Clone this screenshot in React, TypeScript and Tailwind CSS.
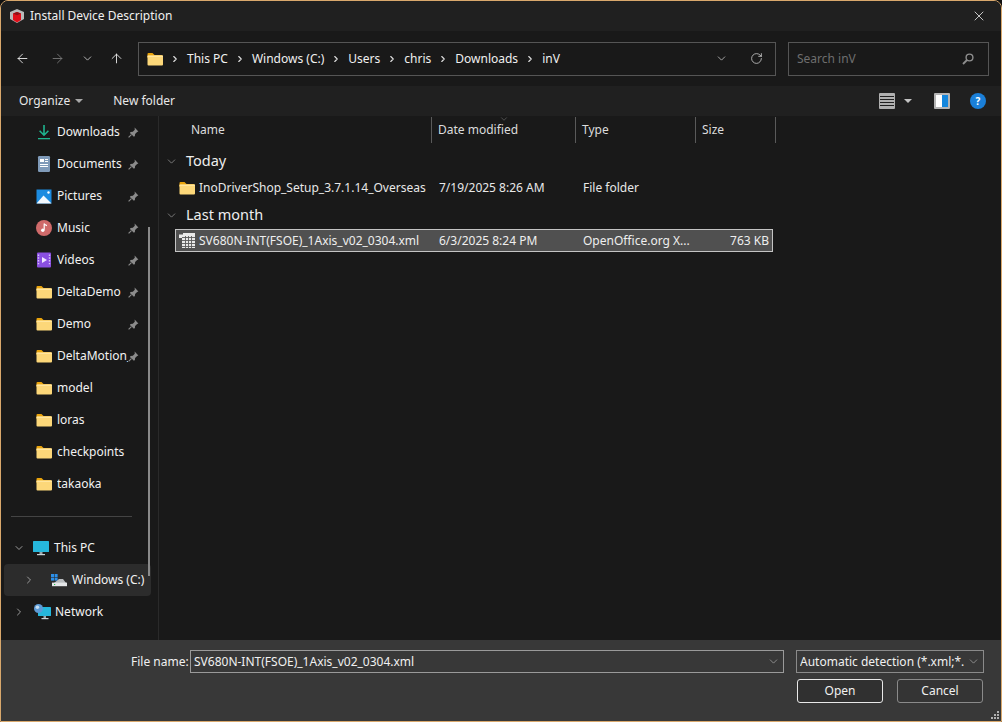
import { ArrowLeft, ArrowRight, ArrowUp, ChevronDown, ChevronRight, RotateCw, X } from 'lucide-react'

const font = "font-['Liberation_Sans',Arial,sans-serif]"

function FolderIcon() {
    return (
        <svg width="16" height="14" viewBox="0 0 16 14" className="shrink-0">
            <path d="M0.5 2a1 1 0 0 1 1-1h4l2 2h7a1 1 0 0 1 1 1v2H0.5z" fill="#e9a30c" />
            <rect x="0.5" y="3.6" width="15.5" height="10" rx="1" fill="#fcd779" />
            <rect x="0.5" y="3.6" width="15.5" height="1.2" fill="#ffe9a8" />
        </svg>
    )
}

function PinIcon() {
    return (
        <svg width="11" height="11" viewBox="0 0 11 11" className="shrink-0">
            <path d="M6.6 0.6l3.8 3.8-1.3.5-2 2-.2 2.2-1 .7L1.9 6l.7-1 2.2-.2 2-2z" fill="#8b8b8b" />
            <path d="M3.4 7.6L.6 10.4" stroke="#8b8b8b" strokeWidth="1.1" />
        </svg>
    )
}

function DownloadIcon() {
    return (
        <svg width="16" height="16" viewBox="0 0 16 16" className="shrink-0">
            <path d="M8 1v10M3.6 6.8L8 11.2l4.4-4.4" stroke="#1fb58f" strokeWidth="1.6" fill="none" />
            <rect x="2" y="14" width="12" height="1.3" fill="#1fb58f" />
        </svg>
    )
}

function DocumentIcon() {
    return (
        <svg width="16" height="16" viewBox="0 0 16 16" className="shrink-0">
            <rect x="2" y="0" width="12" height="16" rx="1.2" fill="#7f9ab8" />
            <rect x="4" y="3" width="4" height="3" fill="#fff" />
            <rect x="9" y="3" width="3" height="1" fill="#fff" />
            <rect x="9" y="5" width="3" height="1" fill="#fff" />
            <rect x="4" y="8" width="8" height="1" fill="#fff" />
            <rect x="4" y="10" width="8" height="1" fill="#fff" />
        </svg>
    )
}

function PicturesIcon() {
    return (
        <svg width="16" height="15" viewBox="0 0 16 15" className="shrink-0">
            <rect width="15" height="14" x="0.5" y="0.5" fill="#1c8be0" />
            <path d="M0.5 14.5L7.5 6.5l8 8z" fill="#f2f8fd" />
            <circle cx="12.5" cy="3.5" r="1.2" fill="#fff" />
        </svg>
    )
}

function MusicIcon() {
    return (
        <svg width="16" height="16" viewBox="0 0 16 16" className="shrink-0">
            <circle cx="8" cy="8" r="8" fill="#cf6a6a" />
            <path d="M8.2 3.5v6.3" stroke="#fff" strokeWidth="1.2" />
            <path d="M8.2 3.5l2.8 1.4v1.4L8.2 5z" fill="#fff" />
            <circle cx="6.8" cy="10.2" r="1.7" fill="#fff" />
        </svg>
    )
}

function VideosIcon() {
    return (
        <svg width="16" height="16" viewBox="0 0 16 16" className="shrink-0">
            <rect x="1" y="0.5" width="14" height="15" rx="1" fill="#8a4fe0" />
            <path d="M6 5l5 3-5 3z" fill="#f0e6ff" />
            <path d="M2.5 2.5v11M13.5 2.5v11" stroke="#d8c3f7" strokeWidth="1.4" strokeDasharray="1.4 1.4" />
        </svg>
    )
}

function MonitorIcon() {
    return (
        <svg width="16" height="15" viewBox="0 0 16 15" className="shrink-0">
            <rect x="0" y="0" width="16" height="11" rx="0.6" fill="#26b7dc" />
            <rect x="6.5" y="11" width="3" height="2" fill="#9aa7ad" />
            <rect x="4" y="13" width="8" height="1.2" fill="#c9d2d6" />
        </svg>
    )
}

function DriveIcon() {
    return (
        <svg width="16" height="13" viewBox="0 0 16 13" className="shrink-0">
            <rect x="0" y="0" width="3" height="3" fill="#2c8fe8" />
            <rect x="3.6" y="0" width="3" height="3" fill="#2c8fe8" />
            <rect x="0" y="3.6" width="3" height="3" fill="#2c8fe8" />
            <rect x="3.6" y="3.6" width="3" height="3" fill="#2c8fe8" />
            <path d="M8 5h4l3 4H3z" fill="#b9bcbf" />
            <rect x="1" y="8.6" width="15" height="3.6" fill="#e4e6e8" />
            <rect x="3" y="10" width="1.2" height="1" fill="#27c24c" />
        </svg>
    )
}

function NetworkIcon() {
    return (
        <svg width="17" height="16" viewBox="0 0 17 16" className="shrink-0">
            <rect x="4" y="3" width="13" height="9" rx="0.6" fill="#26b7dc" />
            <rect x="9.5" y="12" width="2.5" height="2" fill="#9aa7ad" />
            <rect x="7.5" y="14" width="7" height="1.2" fill="#c9d2d6" />
            <circle cx="4.5" cy="4.5" r="4.5" fill="#5d9bd6" />
            <circle cx="3.4" cy="3.2" r="1.8" fill="#c6dff3" />
        </svg>
    )
}

function XmlIcon() {
    return (
        <svg width="16" height="15" viewBox="0 0 16 15" className="shrink-0">
            <path d="M0 1.5h4V0h12v15H3V5H0z" fill="#e8e8e8" />
            <path d="M6.5 3v12M9.5 3v12M12.5 3v12M3 4.5h13M3 7.5h13M3 10.5h13M3 13.5h13" stroke="#5a5a5a" strokeWidth="0.9" />
        </svg>
    )
}

function NavRow({ icon, label, pinned }: { icon: React.ReactNode; label: string; pinned?: boolean }) {
    return (
        <div className="flex h-8 shrink-0 items-center pl-[35px]">
            <div className="flex w-[21px] shrink-0 items-center">{icon}</div>
            <span className="w-[71px] shrink-0 overflow-hidden whitespace-nowrap text-[12px] text-[#f2f2f2]">{label}</span>
            {pinned && <PinIcon />}
        </div>
    )
}

function TreeRow({ icon, label, open, active }: { icon: React.ReactNode; label: string; open?: boolean; active?: boolean }) {
    return (
        <div className={`flex h-8 shrink-0 items-center rounded-sm ${active ? 'ml-[3px] mr-[7px] bg-[#2c2c2c] pl-[19px]' : 'pl-[12px]'}`}>
            {open ? (
                <ChevronDown size={12} strokeWidth={2} className="mr-[8px] shrink-0 text-[#9a9a9a]" />
            ) : (
                <ChevronRight size={12} strokeWidth={2} className={`shrink-0 text-[#9a9a9a] ${active ? 'mr-[16px]' : 'mr-[9px]'}`} />
            )}
            <div className="flex w-[21px] shrink-0 items-center">{icon}</div>
            <span className="whitespace-nowrap text-[12px] text-[#f2f2f2]">{label}</span>
        </div>
    )
}

function HeaderCell({ label, width }: { label: string; width: string }) {
    return (
        <div className={`flex h-[26px] items-center border-r border-[#5a5a5a] pl-[6px] text-[12px] text-[#dcdcdc] ${width}`}>{label}</div>
    )
}

function GroupHeader({ label }: { label: string }) {
    return (
        <div className="flex h-[28px] items-center pl-[6px]">
            <ChevronDown size={13} strokeWidth={1.2} className="mr-[8px] text-[#a8a8a8]" />
            <span className="text-[14.5px] text-[#eeeeee]">{label}</span>
        </div>
    )
}

export default function App() {
    const crumbs = ['This PC', 'Windows (C:)', 'Users', 'chris', 'Downloads', 'inV']

    return (
        <div className={`${font} h-[722px] w-[1002px] overflow-hidden bg-[#111111]`}>
            <div className="relative flex h-full w-full flex-col overflow-hidden rounded-t-lg border border-[#d9a86c] bg-[#191919]">

                {/* Title bar */}
                <div className="flex h-[30px] shrink-0 items-center bg-[#202020] pl-[8px] pr-[14px]">
                    <svg width="16" height="16" viewBox="0 0 16 16" className="shrink-0">
                        <path d="M8 1l7 3v7l-7 4-7-4V4z" fill="#b9b9b9" />
                        <path d="M4 5.5l4-1.6 4 1.6v6.5l-4 2.6-4-2.6z" fill="#e00f1a" />
                        <path d="M4 5.5l4-1.6 4 1.6-4 1.8z" fill="#8e1016" />
                    </svg>
                    <span className="ml-[5px] text-[12px] text-[#f0f0f0]">Install Device Description</span>
                    <X size={16} strokeWidth={1.2} className="ml-auto text-[#f0f0f0]" />
                </div>

                {/* Address bar */}
                <div className="flex h-[55px] shrink-0 items-center pr-[12px]">
                    <div className="flex w-[137px] shrink-0 items-center pl-[14px] text-[#f0f0f0]">
                        <ArrowLeft size={15} strokeWidth={1.4} />
                        <ArrowRight size={15} strokeWidth={1.4} className="ml-[20px] text-[#7a7a7a]" />
                        <ChevronDown size={13} strokeWidth={1.6} className="ml-[16px] text-[#c8c8c8]" />
                        <ArrowUp size={15} strokeWidth={1.4} className="ml-[15px]" />
                    </div>
                    <div className="flex h-[34px] w-[638px] shrink-0 items-center border border-[#555555] pl-[8px] pr-[12px]">
                        <FolderIcon />
                        {crumbs.map((c) => (
                            <div key={c} className="flex items-center">
                                <ChevronRight size={10} strokeWidth={2.6} className="mx-[7px] text-[#e0e0e0]" />
                                <span className="whitespace-nowrap text-[12px] text-[#f0f0f0]">{c}</span>
                            </div>
                        ))}
                        <ChevronDown size={13} strokeWidth={1.4} className="ml-auto mr-[22px] text-[#d0d0d0]" />
                        <RotateCw size={13} strokeWidth={1.4} className="text-[#d8d8d8]" />
                    </div>
                    <div className="ml-[12px] flex h-[34px] grow items-center justify-between border border-[#555555] pl-[8px] pr-[14px]">
                        <span className="text-[12px] text-[#6e6e6e]">Search inV</span>
                        <svg width="12" height="12" viewBox="0 0 12 12">
                            <circle cx="7.5" cy="4.5" r="3.4" stroke="#8e8e8e" strokeWidth="1.4" fill="none" />
                            <path d="M5 7L1 11" stroke="#8e8e8e" strokeWidth="1.8" />
                        </svg>
                    </div>
                </div>

                {/* Toolbar */}
                <div className="flex h-[30px] shrink-0 items-center bg-[#202020] pl-[18px] pr-[15px] text-[12px] text-[#e8e8e8]">
                    <span>Organize</span>
                    <div className="ml-[5px] h-0 w-0 border-x-[4px] border-t-[4px] border-x-transparent border-t-[#a8a8a8]" />
                    <span className="ml-[30px]">New folder</span>
                    <div className="ml-auto flex h-[16px] w-[16px] flex-col justify-center gap-[2px] rounded-[1px] bg-[#b0b0b0] px-[1px]">
                        <div className="h-px bg-[#202020]" />
                        <div className="h-px bg-[#202020]" />
                        <div className="h-px bg-[#202020]" />
                        <div className="h-px bg-[#202020]" />
                    </div>
                    <div className="ml-[9px] h-0 w-0 border-x-[4px] border-t-[4px] border-x-transparent border-t-[#c4c4c4]" />
                    <div className="ml-[22px] flex h-[16px] w-[16px] rounded-[1px] border-2 border-[#b4b4b4]">
                        <div className="w-1/2 bg-white" />
                        <div className="w-1/2 bg-[#1487de]" />
                    </div>
                    <div className="ml-[20px] flex h-[16px] w-[16px] items-center justify-center rounded-full bg-[#1a7fd8] text-[10px] font-bold text-white">?</div>
                </div>

                {/* Main area */}
                <div className="flex min-h-0 grow">

                    {/* Navigation pane */}
                    <div className="relative flex w-[158px] shrink-0 flex-col overflow-hidden border-r border-[#2a2a2a]">
                        <NavRow icon={<DownloadIcon />} label="Downloads" pinned />
                        <NavRow icon={<DocumentIcon />} label="Documents" pinned />
                        <NavRow icon={<PicturesIcon />} label="Pictures" pinned />
                        <NavRow icon={<MusicIcon />} label="Music" pinned />
                        <NavRow icon={<VideosIcon />} label="Videos" pinned />
                        <NavRow icon={<FolderIcon />} label="DeltaDemo" pinned />
                        <NavRow icon={<FolderIcon />} label="Demo" pinned />
                        <NavRow icon={<FolderIcon />} label="DeltaMotion_" pinned />
                        <NavRow icon={<FolderIcon />} label="model" />
                        <NavRow icon={<FolderIcon />} label="loras" />
                        <NavRow icon={<FolderIcon />} label="checkpoints" />
                        <NavRow icon={<FolderIcon />} label="takaoka" />
                        <div className="ml-[10px] mt-[16px] mb-[15px] h-px w-[121px] shrink-0 bg-[#444444]" />
                        <TreeRow open icon={<MonitorIcon />} label="This PC" />
                        <TreeRow active icon={<DriveIcon />} label="Windows (C:)" />
                        <TreeRow icon={<NetworkIcon />} label="Network" />
                        {/* scrollbar thumb */}
                        <div className="absolute left-[147px] top-[111px] h-[349px] w-[2px] bg-[#8a8a8a]" />
                    </div>

                    {/* File list */}
                    <div className="flex min-w-0 grow flex-col pt-px">
                        <div className="relative flex">
                            <div className="flex h-[26px] w-[273px] items-center border-r border-[#5a5a5a] pl-[32px] text-[12px] text-[#dcdcdc]">Name</div>
                            <HeaderCell label="Date modified" width="w-[144px]" />
                            <HeaderCell label="Type" width="w-[120px]" />
                            <HeaderCell label="Size" width="w-[80px]" />
                            <ChevronDown size={10} strokeWidth={1} className="absolute left-[340px] top-[-3px] text-[#9a9a9a]" />
                        </div>
                        <div className="mt-[4px]">
                            <GroupHeader label="Today" />
                        </div>
                        <div className="flex h-[26px] items-center text-[12px] text-[#e8e8e8]">
                            <div className="flex w-[280px] items-center pl-[20px]">
                                <FolderIcon />
                                <span className="ml-[4px] whitespace-nowrap">InoDriverShop_Setup_3.7.1.14_Overseas</span>
                            </div>
                            <span className="w-[144px]">7/19/2025 8:26 AM</span>
                            <span>File folder</span>
                        </div>
                        <GroupHeader label="Last month" />
                        <div className="ml-[16px] flex h-[23px] w-[598px] items-center border border-[#c4c4c4] bg-[#505050] text-[12px] text-[#eeeeee]">
                            <div className="flex w-[263px] shrink-0 items-center pl-[3px]">
                                <XmlIcon />
                                <span className="ml-[4px] whitespace-nowrap">SV680N-INT(FSOE)_1Axis_v02_0304.xml</span>
                            </div>
                            <span className="w-[144px] shrink-0">6/3/2025 8:24 PM</span>
                            <span className="w-[120px] shrink-0">OpenOffice.org X...</span>
                            <span className="grow pr-[3px] text-right">763 KB</span>
                        </div>
                    </div>
                </div>

                {/* Footer */}
                <div className="relative flex h-[81px] shrink-0 flex-col bg-[#383838] pr-[17px] pt-[10px] text-[12px] text-[#f0f0f0]">
                    <div className="flex items-center">
                        <span className="ml-[130px] w-[59px] shrink-0">File name:</span>
                        <div className="flex h-[23px] w-[594px] shrink-0 items-center justify-between border border-[#9a9a9a] pl-[3px] pr-[3px]">
                            <span>SV680N-INT(FSOE)_1Axis_v02_0304.xml</span>
                            <ChevronDown size={13} strokeWidth={1.2} className="text-[#b8b8b8]" />
                        </div>
                        <div className="ml-[12px] flex h-[23px] grow items-center justify-between border border-[#8a8a8a] pl-[3px] pr-[3px]">
                            <span className="w-[164px] overflow-hidden whitespace-nowrap">Automatic detection (*.xml;*.sc</span>
                            <ChevronDown size={13} strokeWidth={1.2} className="text-[#b8b8b8]" />
                        </div>
                    </div>
                    <div className="mt-[6px] flex justify-end gap-[14px] pr-px">
                        <div className="flex h-[24px] w-[86px] items-center justify-center rounded-[3px] border border-[#e8e8e8] bg-[#303030]">Open</div>
                        <div className="flex h-[24px] w-[86px] items-center justify-center rounded-[3px] border border-[#8a8a8a] bg-[#343434]">Cancel</div>
                    </div>
                    {/* resize grip */}
                    <svg width="9" height="9" viewBox="0 0 9 9" className="absolute bottom-[1px] right-[1px]">
                        <path d="M6 0h2v2H6zM3 3h2v2H3zM6 3h2v2H6zM0 6h2v2H0zM3 6h2v2H3zM6 6h2v2H6z" fill="#b0b0b0" />
                    </svg>
                </div>
            </div>
        </div>
    )
}
